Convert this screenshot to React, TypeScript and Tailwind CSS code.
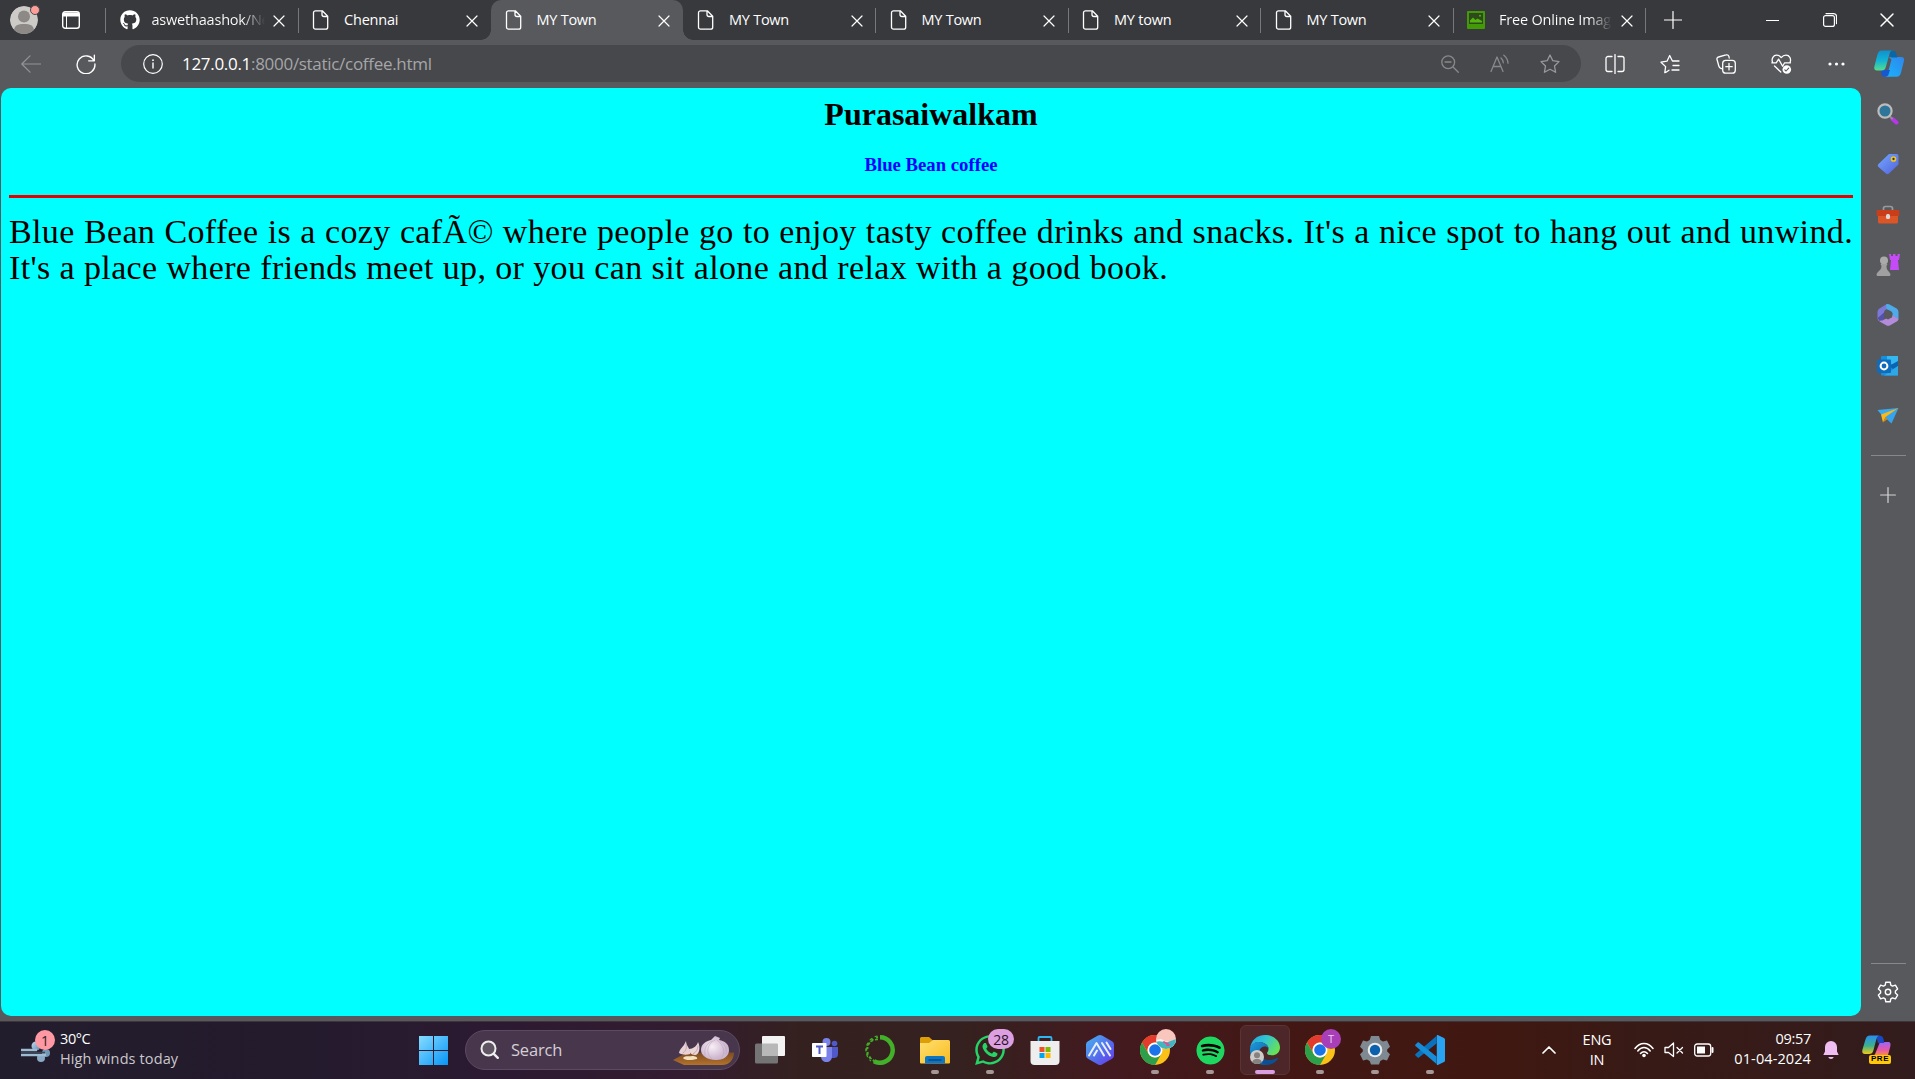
import React, { type ReactNode } from "react";
import { FaGithub, FaSpotify, FaWhatsapp } from "react-icons/fa";

type IconProps = { children: ReactNode; w?: number; h?: number; box?: string; className?: string };

const Icon = ({ children, w = 20, h = 20, box, className = "" }: IconProps) => (
  <svg
    width={w}
    height={h}
    viewBox={box ?? `0 0 ${w} ${h}`}
    fill="none"
    strokeLinecap="round"
    strokeLinejoin="round"
    className={`shrink-0 ${className}`}
  >
    {children}
  </svg>
);

/* ---------- tab strip ---------- */

const PageIcon = () => (
  <Icon w={18} h={20}>
    <path d="M3.5 .8h6.8l5.4 5.4v11a2 2 0 0 1-2 2H3.500a2 2 0 0 1-2-2V2.800a2 2 0 0 1 2-2z M10 1v3.500a2 2 0 0 0 2 2h3.600" stroke="#fff" strokeWidth="1.3" />
  </Icon>
);

const ImageIcon = () => (
  <Icon w={18} h={18}>
    <rect width="18" height="18" rx="1" fill="#429a06" />
    <rect x="2" y="2" width="14" height="11" fill="#2e4a1c" />
    <path d="M3 11.500V9.500l3-3 2.500 2.500 2-1.500 4.500 2.500v1.500z" fill="#53b60c" />
    <circle cx="13" cy="4.800" r="1" fill="#53b60c" />
  </Icon>
);

const Cross = ({ size = 10 }: { size?: number }) => (
  <Icon w={size} h={size} box="0 0 10 10" className="overflow-visible">
    <path d="M0 0l10 10M10 0L0 10" stroke="#fff" strokeWidth="1.2" />
  </Icon>
);

type TabData = { title: string; kind: "github" | "page" | "image"; active?: boolean; line?: boolean; fade?: boolean; spacing: string };

const tabs: TabData[] = [
  { title: "aswethaashok/Ne", kind: "github", line: true, fade: true, spacing: "tracking-[-0.2px]" },
  { title: "Chennai", kind: "page", spacing: "tracking-[-0.2px]" },
  { title: "MY Town", kind: "page", active: true, spacing: "tracking-[-0.25px]" },
  { title: "MY Town", kind: "page", line: true, spacing: "tracking-[-0.25px]" },
  { title: "MY Town", kind: "page", line: true, spacing: "tracking-[-0.25px]" },
  { title: "MY town", kind: "page", line: true, spacing: "tracking-[-0.2px]" },
  { title: "MY Town", kind: "page", line: true, spacing: "tracking-[-0.25px]" },
  { title: "Free Online Image", kind: "image", line: true, fade: true, spacing: "tracking-[-0.2px]" },
];

const Tab = ({ tab }: { tab: TabData }) => (
  <div
    className={`relative flex h-10 w-[192.5px] shrink-0 items-center pl-[14px] ${tab.active ? "rounded-t-[10px] bg-[#58595d]" : ""}`}
  >
    {tab.active && (
      <>
        <span className="absolute bottom-0 -left-[10px] size-[10px] bg-[radial-gradient(circle_at_0_0,#38393c_9.500px,#58595d_10px)]" />
        <span className="absolute bottom-0 -right-[10px] size-[10px] bg-[radial-gradient(circle_at_100%_0,#38393c_9.500px,#58595d_10px)]" />
      </>
    )}
    <span className="flex w-[32px] shrink-0">
      {tab.kind === "github" && <FaGithub className="size-5 text-white" />}
      {tab.kind === "page" && <PageIcon />}
      {tab.kind === "image" && <ImageIcon />}
    </span>
    <span
      className={`w-[113px] shrink-0 overflow-hidden text-[14.500px] leading-5 whitespace-nowrap ${tab.spacing} ${tab.fade ? "bg-linear-to-r from-white from-80% to-transparent bg-clip-text text-transparent" : "text-white"}`}
    >
      {tab.title}
    </span>
    <span className="ml-[9.500px] flex pt-px">
      <Cross />
    </span>
    {tab.line && <span className="absolute top-2 -right-[0.500px] h-[25px] w-px bg-[#77787b]" />}
  </div>
);

const TabStrip = () => (
  <header className="flex h-10 shrink-0 items-center bg-[#38393c]">
    <div className="flex w-[105px] shrink-0 items-center pl-[10px]">
      <div className="relative size-7">
        <Icon w={28} h={28} className="overflow-hidden rounded-full">
          <circle cx="14" cy="14" r="14" fill="#cdcbc8" />
          <circle cx="14" cy="10.500" r="6" fill="#8c8986" />
          <path d="M4 25c0-6 4-7 10-7s10 1 10 7c-6 5-14 5-20 0z" fill="#8c8986" />
        </Icon>
        <span className="absolute -top-px -right-[2px] size-[10px] rounded-full border border-[#4c4d50] bg-[#ff9e98]" />
      </div>
      <Icon w={18} h={18} className="ml-6">
        <rect x=".7" y=".7" width="16.600" height="16.600" rx="2.500" stroke="#fff" strokeWidth="1.400" />
        <path d="M1 1.500h16v4H1z" fill="#fff" />
        <path d="M4.500 5v12" stroke="#fff" strokeWidth="1" />
      </Icon>
    </div>
    <div className="relative ml-[0.500px] flex">
      <span className="absolute top-2 -left-[0.500px] h-[25px] w-px bg-[#77787b]" />
      {tabs.map((t, i) => (
        <Tab key={i} tab={t} />
      ))}
    </div>
    <div className="flex w-[54px] justify-center">
      <Icon w={18} h={18}>
        <path d="M9 .5v17M.5 9h17" stroke="#fff" strokeWidth="1.200" />
      </Icon>
    </div>
    <div className="-mr-px ml-auto flex">
      <span className="flex w-[57.500px] items-center justify-center">
        <span className="h-px w-[13px] bg-white" />
      </span>
      <span className="flex w-[57.500px] items-center justify-center">
        <Icon w={14} h={14}>
          <rect x=".6" y="2.600" width="10.800" height="10.800" rx="2" stroke="#fff" strokeWidth="1.200" />
          <path d="M3 .6h7.500a3 3 0 0 1 3 3v7" stroke="#fff" strokeWidth="1.200" />
        </Icon>
      </span>
      <span className="flex w-[57.500px] items-center justify-center">
        <Cross size={12} />
      </span>
    </div>
  </header>
);

/* ---------- address bar ---------- */

const Tool = ({ children }: { children: ReactNode }) => (
  <span className="flex w-[55.300px] shrink-0 items-center justify-center">{children}</span>
);

const Toolbar = () => (
  <div className="flex h-12 shrink-0 items-center bg-[#58595d] pb-px pr-[1px]">
    <div className="flex w-[121px] shrink-0 items-center pl-[21px]">
      <Icon w={20} h={18}>
        <path d="M19.500 9H.8M9 .8L.8 9 9 17.200" stroke="#939497" strokeWidth="1.200" />
      </Icon>
      <Icon w={20} h={20} box="0 0 22 22" className="ml-[35px]">
        <path d="M19.800 7.500A9.800 9.800 0 1 0 20.800 11M20.200 1.200v6.300h-6.300" stroke="#fff" strokeWidth="1.500" />
      </Icon>
    </div>
    <div className="flex h-[37px] w-[1460px] shrink-0 items-center rounded-full bg-[#47484b] pl-[22px]">
      <Icon w={20} h={20}>
        <circle cx="10" cy="10" r="9.300" stroke="#fff" strokeWidth="1.200" />
        <path d="M10 9v5" stroke="#fff" strokeWidth="1.400" />
        <circle cx="10" cy="6.200" r=".9" fill="#fff" />
      </Icon>
      <span className="ml-[19px] text-[17px] tracking-[-0.3px] text-[#a5a6a8]">
        <span className="text-white">127.0.0.1</span>:8000/static/coffee.html
      </span>
      <div className="mr-[6px] ml-auto flex">
        <span className="flex w-[50px] items-center justify-center">
          <Icon w={18} h={18}>
            <path d="M12.300 12.300l5 5M4 7h6" stroke="#88898b" strokeWidth="1.300" />
            <circle cx="7.200" cy="7.200" r="6.400" stroke="#88898b" strokeWidth="1.300" />
          </Icon>
        </span>
        <span className="flex w-[50px] items-center justify-center">
          <Icon w={20} h={19}>
            <path d="M1 17.500L7 3l6 14.500M3 12.500h8M11 4c1.500 1.300 2.200 2.800 2.300 4.800M13.800 1.200c2.600 2 4 4.800 4.200 8" stroke="#88898b" strokeWidth="1.300" />
          </Icon>
        </span>
        <span className="flex w-[50px] items-center justify-center">
          <Icon w={20} h={20}>
            <path d="M10 1l2.800 5.700 6.200.9-4.500 4.400 1.100 6.300L10 15.300l-5.600 3 1.100-6.300L1 7.600l6.200-.9z" stroke="#98999b" strokeWidth="1.300" />
          </Icon>
        </span>
      </div>
    </div>
    <div className="ml-auto flex items-center">
      <Tool>
        <Icon w={20} h={20}>
          <path d="M7 2.500H3a2 2 0 0 0-2 2v11a2 2 0 0 0 2 2h4M13 2.500h4a2 2 0 0 1 2 2v11a2 2 0 0 1-2 2h-4M10 .6v18.800" stroke="#fff" strokeWidth="1.300" />
        </Icon>
      </Tool>
      <Tool>
        <Icon w={20} h={20}>
          <path d="M6 18.200l-1.200.5.800-6.100L1 8.200l6-1L9.700 1.500 12.400 7H19M13 11.500h6M12 16h7M6 18.200l3-2" stroke="#fff" strokeWidth="1.300" />
        </Icon>
      </Tool>
      <Tool>
        <Icon w={20} h={20}>
          <path d="M6.500 15L4.800 14.300a3 3 0 0 1-1.900-2L1 5.500a2 2 0 0 1 1.500-2.500L10 .9a2.300 2.300 0 0 1 2.900 1.500l.3 1.600M13 9.500v6.400M9.800 12.700h6.400" stroke="#fff" strokeWidth="1.300" />
          <rect x="6.700" y="6.300" width="12.600" height="12.900" rx="3" stroke="#fff" strokeWidth="1.300" />
        </Icon>
      </Tool>
      <Tool>
        <Icon w={21} h={20}>
          <path d="M1.500 8C.2 4.500 2.500 1.200 5.500 1.200c2 0 3.500.8 4.700 2.400C11.500 2 13 1.200 15 1.200c3.500 0 5.300 3.500 4.200 6.800M.8 8.800h4.400l2.400-3.700 4 7.200 2-3.500h5.900M3.500 12l6.300 6" stroke="#fff" strokeWidth="1.300" />
          <circle cx="15.800" cy="15.500" r="4.300" fill="#fff" />
          <path d="M13.800 15.800l1.300 1.200 2.600-2.800" stroke="#58595d" strokeWidth="1.100" />
        </Icon>
      </Tool>
      <Tool>
        <Icon w={17} h={4}>
          <circle cx="2" cy="2" r="1.600" fill="#fff" />
          <circle cx="8.500" cy="2" r="1.600" fill="#fff" />
          <circle cx="15" cy="2" r="1.600" fill="#fff" />
        </Icon>
      </Tool>
      <span className="flex w-[50px] items-center justify-center">
        <Icon w={30} h={27}>
          <defs>
            <linearGradient id="copA" x1="0" y1="0" x2="0" y2="1">
              <stop stopColor="#0f91cf" />
              <stop offset=".5" stopColor="#12b3d4" />
              <stop offset="1" stopColor="#56dd8e" />
            </linearGradient>
            <linearGradient id="copB" x1="1" y1="0" x2="0" y2="1">
              <stop stopColor="#2f86ee" />
              <stop offset="1" stopColor="#18b5fb" />
            </linearGradient>
          </defs>
          <path d="M15 7h12.500c2.500 0 2.900 2 2.300 4.500l-2.800 11c-.8 3-2 4.200-4.500 4.200H10c2.500 0 3.500-2 4-4.200l3.500-13z" fill="url(#copB)" />
          <path d="M7 20h9l-1.500 4.500c-.5 1.500-1.800 2.300-4 2.300-2 0-2.600-1-3-3z" fill="#1758d0" />
          <path d="M15 .8h4c2.200 0 3 1.500 3.500 3.500l.8 3.200H17z" fill="#0a66a5" />
          <path d="M8 .5h11c-2.200 0-3 1.500-3.700 4L12 16.500c-.9 3-2 4-4.500 4H3C.5 20.500-.2 18.500.5 16L3.300 5C4.200 1.800 5.500.5 8 .5z" fill="url(#copA)" />
        </Icon>
      </span>
    </div>
  </div>
);

/* ---------- web page ---------- */

const Page = () => (
  <main className="ml-px flex h-[927.500px] w-[1860px] shrink-0 flex-col rounded-[10px] bg-[#00ffff] px-2 pt-2 font-['Liberation_Serif',serif] text-black">
    <h1 className="text-center text-[32px] leading-[37px] font-bold">Purasaiwalkam</h1>
    <h3 className="mt-[21px] text-center text-[18.720px] leading-[21px] font-bold text-[#0000ff]">Blue Bean coffee</h3>
    <hr className="mt-5 h-[3px] shrink-0 border-0 bg-[#e60000]" />
    <div className="mt-4 text-[34px] leading-9 whitespace-nowrap">
      <p className="tracking-[0.36px] [text-align-last:justify]">
        Blue Bean Coffee is a cozy cafÃ© where people go to enjoy tasty coffee drinks and snacks. It's a nice spot to hang out and unwind.
      </p>
      <p className="w-[1159px] tracking-[0.36px] [text-align-last:justify]">
        It's a place where friends meet up, or you can sit alone and relax with a good book.
      </p>
    </div>
  </main>
);

/* ---------- side bar ---------- */

const sideIcons: ReactNode[] = [
  <Icon key="search" w={22} h={22}>
    <path d="M15.500 16l4 3.500" stroke="#b835ee" strokeWidth="4" />
    <path d="M12 12.500l3 3" stroke="#8f8f92" strokeWidth="2" />
    <circle cx="8" cy="8" r="6.600" fill="#2d7599" stroke="#bcbcbc" strokeWidth="2.200" />
  </Icon>,
  <Icon key="tag" w={22} h={22}>
    <defs>
      <linearGradient id="tag" x1="0" y1="0" x2="1" y2="1">
        <stop stopColor="#73a9ff" />
        <stop offset="1" stopColor="#5361dc" />
      </linearGradient>
    </defs>
    <path d="M12 1h7.500A2 2 0 0 1 21.500 3v8.500L12 20.500c-1 1-2 1-3 0L1.500 14c-1-1-1-2 0-3z" fill="url(#tag)" />
    <circle cx="16.500" cy="6" r="2" stroke="#f2c51b" strokeWidth="1.700" fill="#333" />
  </Icon>,
  <Icon key="box" w={24} h={20}>
    <path d="M7.500 6V3.500a2 2 0 0 1 2-2h5a2 2 0 0 1 2 2V6" stroke="#9a9a9a" strokeWidth="1.700" />
    <rect x="2" y="6" width="20" height="12.500" rx="1.500" fill="#db5527" />
    <path d="M1.500 5h21a.8.8 0 0 1 .8.800V11H.7V5.800a.8.800 0 0 1 .8-.8z" fill="#c93d19" />
    <rect x="10" y="9" width="4" height="5" rx="1.500" fill="#d9d9d9" />
  </Icon>,
  <Icon key="chess" w={24} h={24}>
    <path d="M13 1h2v2h2V1h2.500v2h2V1H24l-1 6h-1l1 10h-9l1-10h-1z" fill="#c44bf5" />
    <circle cx="8" cy="7.500" r="4" fill="#aaa" />
    <path d="M4.500 11h7l-1 2c0 3 .7 4 3 6.500 1.500 1.500 1 3.500 0 3.500H1.500C.5 23 0 21 1.500 19.500 4 17 5.500 16 5.500 13z" fill="#a0a0a0" />
  </Icon>,
  <Icon key="m365" w={22} h={22}>
    <path d="M9 .5L2.500 4.500A4 4 0 0 0 .5 8v7c1 2 3 2 4.500 1l2-1V8.500c0-1.500 1-2.500 2-3l4-2z" fill="#7d78d8" />
    <path d="M9 .5c1.200-.7 2.500-.6 3.600 0l7 4A4 4 0 0 1 21.500 8v7l-6-3.300V10c0-1.500-.7-2.500-2-3L9.500 5z" fill="#4eaae9" />
    <path d="M1 16l4.500.5 5-2.800 4.700-2.500 6.300 3.500c0 1.400-.6 2-1.800 2.700l-6.500 3.800c-1.300.8-2.700.8-4 0L3 17.800z" fill="#b48ada" />
    <path d="M7 8.500v6.800L2.500 17 .7 14z" fill="#5551a7" />
    <path d="M7.300 8.800l3.700-2.200 4.200 2.400v4.200L11 15.600l-3.700-2z" fill="#58595d" />
  </Icon>,
  <Icon key="outlook" w={22} h={22}>
    <rect x="4" y="1" width="17" height="19.500" rx="1" fill="#1490df" />
    <path d="M10 1h11v8H10z" fill="#35b8f1" />
    <path d="M12 11l9-5v5l-5 3z" fill="#0a64b0" />
    <path d="M21 11v9.500H7z" fill="#2fa6e6" />
    <rect y="4.500" width="14" height="13.500" rx="1" fill="#0f6cbd" />
    <circle cx="7" cy="11" r="3.400" stroke="#fff" strokeWidth="2" />
  </Icon>,
  <Icon key="plane" w={22} h={18}>
    <path d="M.5 3L21.500 1 5 8.500z" fill="#39a9f0" />
    <path d="M21.500 1L14.500 16.500 7.500 10z" fill="#35a4ef" />
    <path d="M4 7.500L21.500 1 8.500 10 6 15.500z" fill="#f8b91b" />
    <path d="M6 15.500l2.500-5.500 2 2z" fill="#d98a10" />
  </Icon>,
];

const SideBar = () => (
  <aside className="ml-auto flex w-[53px] shrink-0 flex-col items-center pt-px">
    {sideIcons.map((icon, i) => (
      <span key={i} className="mr-px flex h-[50.300px] shrink-0 items-center justify-center">
        {icon}
      </span>
    ))}
    <span className="mt-[14px] h-px w-[35px] shrink-0 bg-[#87888b]" />
    <Icon w={16} h={16} className="mt-[31px] mr-px">
      <path d="M8 .6v14.800M.6 8h14.800" stroke="#d5d5d6" strokeWidth="1.200" />
    </Icon>
    <span className="mt-auto h-px w-[35px] shrink-0 bg-[#87888b]" />
    <Icon w={22} h={22} className="mt-[17px] mr-px mb-[18px]">
      <path
        d="M8.800 1.200h4.400l.6 2.900 1.700 1 2.900-1 2.200 3.800-2.200 2v2.200l2.200 2-2.200 3.800-2.900-1-1.700 1-.6 2.900H8.800l-.6-2.900-1.700-1-2.900 1-2.200-3.800 2.200-2V9.900l-2.200-2 2.200-3.800 2.900 1 1.700-1z"
        stroke="#fff"
        strokeWidth="1.400"
      />
      <circle cx="11" cy="11" r="2.700" stroke="#fff" strokeWidth="1.400" />
    </Icon>
  </aside>
);

/* ---------- task bar ---------- */

const Weather = () => (
  <div className="flex items-center pl-5">
    <div className="relative h-[34px] w-[36px]">
      <Icon w={32} h={34}>
        <defs>
          <linearGradient id="wind" x1="0" y1="0" x2="1" y2="1">
            <stop stopColor="#c6dcef" />
            <stop offset="1" stopColor="#5787ac" />
          </linearGradient>
        </defs>
        <circle cx="16" cy="13" r="4.500" fill="url(#wind)" />
        <circle cx="26" cy="20" r="4" fill="#7398b6" />
        <circle cx="21" cy="25" r="4" fill="#89aac5" />
        <path d="M1 17h16M1 22h25" stroke="#9ebbd4" strokeWidth="2.400" strokeLinecap="butt" />
        <path d="M1 19.500h24" stroke="#3a4457" strokeWidth="1.500" strokeLinecap="butt" />
      </Icon>
      <span className="absolute -top-[3px] left-[15px] flex size-5 items-center justify-center rounded-full bg-[#ff98a2] text-[14px] text-[#2b1d24]">1</span>
    </div>
    <div className="ml-1 pb-[2px] text-[14.500px] leading-5">
      <div className="tracking-[-0.4px] text-white">30°C</div>
      <div className="tracking-[0.120px] text-[#cac8cc]">High winds today</div>
    </div>
  </div>
);

const Windows = () => (
  <Icon w={29} h={29}>
    <defs>
      <linearGradient id="win" x1="0" y1="0" x2="29" y2="29" gradientUnits="userSpaceOnUse">
        <stop stopColor="#86dcff" />
        <stop offset="1" stopColor="#0795f7" />
      </linearGradient>
    </defs>
    <path d="M0 0h14v14H0zM15 0h14v14H15zM0 15h14v14H0zM15 15h14v14H15z" fill="url(#win)" />
  </Icon>
);

const Garlic = () => (
  <Icon w={62} h={32}>
    <defs>
      <radialGradient id="bulb" cx=".4" cy=".45">
        <stop stopColor="#f8eff5" />
        <stop offset="1" stopColor="#cdb6cf" />
      </radialGradient>
      <linearGradient id="board" x1="0" y1="0" x2="0" y2="1">
        <stop stopColor="#7d4c24" />
        <stop offset="1" stopColor="#b3712b" />
      </linearGradient>
    </defs>
    <path d="M0 24l13-7 48-.5c0 6-4 12.500-12 12.500H11z" fill="url(#board)" />
    <path d="M6 17c1-5 4-5 7-12 0 5 5 8 4 13-3 1-8 1-11-1z" fill="#e9d2d6" />
    <path d="M16 13c4 0 8-3 9-7 3 6 1 13-3 13-4 0-6-3-6-6z" fill="#ead6d7" />
    <path d="M13 8c1 4 0 7-3 9M25 10c0 4-2 6-5 8" stroke="#b89aa4" strokeWidth=".8" />
    <path d="M10 22c3-3 6-1 9-2 3 0 6 1 5 3-4 1-12 2-14-1z" fill="#f3e1bb" />
    <path d="M28 14c0-6 5-9 10-10l4-4 5 2-1 2c6 1 10 4 10 10s-5 10-13 10-15-4-15-10z" fill="url(#bulb)" />
    <path d="M42 4c-8 4-10 13-3 19M44 4c7 5 9 13 4 19M39 5c-6 3-8 8-7 14M47 5c6 4 7 9 6 13" stroke="#bfa5c2" strokeWidth=".6" />
  </Icon>
);

const TaskView = () => (
  <Icon w={30} h={30}>
    <rect x="0" y="8.500" width="23" height="20" rx="1.500" fill="#747474" />
    <rect x="7" y="1" width="23" height="20" rx="1" fill="#f3f3f3" />
    <path d="M7 8.500h15a1 1 0 0 1 1 1V21H8a1 1 0 0 1-1-1z" fill="#b9b8b8" />
  </Icon>
);

const Teams = () => (
  <Icon w={26} h={26}>
    <circle cx="22.500" cy="6.500" r="2.800" fill="#5059c9" />
    <path d="M18 10h8v7c0 3-2 4-4 4h-4z" fill="#5059c9" />
    <circle cx="14.500" cy="5" r="4" fill="#7b83eb" />
    <path d="M9 10h11v9c0 4-2.500 6-5.500 6S9 23 9 19z" fill="#7b83eb" />
    <rect y="6" width="14.500" height="14" rx=".7" fill="#fff" />
    <path d="M4 9.500h7M7.500 9.500v7.500" stroke="#5059c9" strokeWidth="2" strokeLinecap="butt" />
  </Icon>
);

const Anaconda = () => (
  <Icon w={30} h={30}>
    <path d="M15 2.300A12.700 12.700 0 1 1 9 26.200" stroke="#43b02a" strokeWidth="4.500" strokeLinecap="butt" />
    <path d="M13 2.300A12.700 12.700 0 0 0 10 26.500" stroke="#43b02a" strokeWidth="2" strokeDasharray="2 3" strokeLinecap="butt" />
    <path d="M13 4.500A10.500 10.500 0 0 0 9 25" stroke="#43b02a" strokeWidth="1.500" strokeDasharray="3 2" strokeLinecap="butt" />
    <path d="M12.500 1A14.300 14.300 0 0 0 6 26" stroke="#43b02a" strokeWidth="1.200" strokeDasharray="3 3" strokeLinecap="butt" />
  </Icon>
);

const Folder = () => (
  <Icon w={30} h={30}>
    <defs>
      <linearGradient id="fold" x1="0" y1="0" x2="1" y2="1">
        <stop stopColor="#ffe06e" />
        <stop offset="1" stopColor="#f9bb22" />
      </linearGradient>
    </defs>
    <path d="M0 3.500A1.500 1.500 0 0 1 1.500 2H9l4 3.500V11H0z" fill="#dd9e08" />
    <path d="M0 8h9l4-3h15.500A1.500 1.500 0 0 1 30 6.500v21a1 1 0 0 1-1 1H1a1 1 0 0 1-1-1z" fill="url(#fold)" />
    <path d="M5 28.500V23a2 2 0 0 1 2-2h16a2 2 0 0 1 2 2v5.500z" fill="#0c75c5" />
    <path d="M9 25h12" stroke="#07497f" strokeWidth="1.300" />
  </Icon>
);

const Store = () => (
  <Icon w={30} h={30}>
    <path d="M8.500 8V3.200A1.200 1.200 0 0 1 9.700 2h10.600a1.200 1.200 0 0 1 1.200 1.200V8" stroke="#2db6ef" strokeWidth="1.800" />
    <path d="M.5 6h29v20a4 4 0 0 1-4 4h-21a4 4 0 0 1-4-4z" fill="#eeeeee" />
    <path d="M9.500 12h5v5h-5z" fill="#f25022" />
    <path d="M15.500 12h5v5h-5z" fill="#7fba00" />
    <path d="M9.500 18h5v5h-5z" fill="#00a4ef" />
    <path d="M15.500 18h5v5h-5z" fill="#ffb900" />
  </Icon>
);

const HexApp = () => (
  <Icon w={30} h={30}>
    <defs>
      <linearGradient id="hex" x1="0" y1="0" x2="1" y2="1">
        <stop stopColor="#48b5f0" />
        <stop offset=".6" stopColor="#5568ec" />
        <stop offset="1" stopColor="#6a35ec" />
      </linearGradient>
    </defs>
    <path d="M13 .6a4 4 0 0 1 4 0l10 5.600a3.500 3.500 0 0 1 2 3v11.600a3.500 3.500 0 0 1-2 3l-10 5.600a4 4 0 0 1-4 0L3 23.800a3.500 3.500 0 0 1-2-3V9.200a3.500 3.500 0 0 1 2-3z" fill="url(#hex)" />
    <path d="M4 20.500L11.500 8l7.500 12.500M9 20.500l3-5M17 8l8 12.500M21.500 7.500l4 6.500" stroke="#e9efff" strokeWidth="2" />
  </Icon>
);

const Chrome = () => (
  <Icon w={30} h={30}>
    <circle cx="15" cy="15" r="15" fill="#fbc116" />
    <path d="M2 7.500A15 15 0 0 1 28 7.500H15A7.500 7.500 0 0 0 8.500 18.700z" fill="#e33b2e" />
    <path d="M2 7.500A15 15 0 0 0 15 30l6.500-11.300a7.500 7.500 0 0 1-13 0z" fill="#2d9f4b" />
    <circle cx="15" cy="15" r="7.500" fill="#fff" />
    <circle cx="15" cy="15" r="5.800" fill="#1a73e8" />
  </Icon>
);

const Edge = () => (
  <Icon w={30} h={30}>
    <defs>
      <linearGradient id="edA" x1="0" y1="0" x2="1" y2=".5">
        <stop stopColor="#259fe0" />
        <stop offset=".5" stopColor="#30c5d2" />
        <stop offset="1" stopColor="#66e05a" />
      </linearGradient>
      <linearGradient id="edB" x1="0" y1="0" x2="1" y2="1">
        <stop stopColor="#1b9de2" />
        <stop offset="1" stopColor="#0b3f80" />
      </linearGradient>
    </defs>
    <path d="M0 14C1 5 7 0 15 0c9 0 15 6 15 12.500 0 5-4 7.800-8 7.800-3 0-5-1-5-2.300 0-.8 1.500-1.500 1.500-4C18.500 10 14 7 9 7c-5 0-8 3.500-9 7z" fill="url(#edA)" />
    <path d="M0 14C1 9.500 4.500 7 9 7c5 0 9.500 3 9.500 6.500-1-1.500-2.500-2-4-2-3 0-5.500 3-5.500 7 0 6 5 9.500 10 9.500 3 0 6-1.500 8-3.500C24.500 28.500 20 30 15 30 6 30-.5 23 0 14z" fill="url(#edB)" />
    <path d="M9.500 19c1.500 4 5.500 6 10 6 3 0 5.500-1 7.500-2 1-.4 1.300.4.800 1C25 28 20 30 16.500 29.500 12 29 8.500 24 9.500 19z" fill="#0c4f93" />
  </Icon>
);

const Gear = () => (
  <Icon w={30} h={30}>
    <path
      d="M11 1h8l1.300 4 2.700 1.500 4-1 3 6.200-2.800 2.800v2l2.800 2.800-3 6.200-4-1L20.300 26 19 29.500h-8L9.700 26 7 24.500l-4 1-3-6.200 2.800-2.800v-2L0 11.700l3-6.200 4 1L9.700 5z"
      fill="#7f8991"
    />
    <circle cx="15" cy="15" r="7.300" fill="#ececec" />
    <circle cx="15" cy="15" r="5.200" fill="#0b61ae" />
  </Icon>
);

const VsCode = () => (
  <Icon w={30} h={30}>
    <path d="M21.500 1v7.500L4 22.500c-.5.400-1 .3-1.400 0L.5 20.600c-.5-.5-.5-1.200 0-1.700z" fill="#0a72bd" />
    <path d="M21.500 29v-7.500L4 7.500c-.5-.4-1-.3-1.400 0L.5 9.400c-.5.5-.5 1.200 0 1.700z" fill="#168dd8" />
    <path d="M21.800.3c.4-.3.900-.3 1.500 0L29 3c.6.3 1 .9 1 1.600v20.800c0 .7-.4 1.300-1 1.600l-5.700 2.700c-.6.300-1.100.3-1.500 0z" fill="#28a4f2" />
  </Icon>
);

type App = { name: string; icon: ReactNode; badge?: ReactNode; running?: boolean; active?: boolean };

const apps: App[] = [
  { name: "view", icon: <TaskView /> },
  { name: "teams", icon: <Teams /> },
  { name: "anaconda", icon: <Anaconda /> },
  { name: "files", icon: <Folder />, running: true },
  {
    name: "whatsapp",
    icon: <FaWhatsapp className="size-[34px] shrink-0 text-[#25d366]" />,
    running: true,
    badge: (
      <span className="absolute -top-[6px] left-[13px] flex h-5 w-[26px] items-center justify-center rounded-full bg-[#dd9fe2] text-[14px] tracking-tight text-[#24151f]">28</span>
    ),
  },
  { name: "store", icon: <Store /> },
  { name: "hex", icon: <HexApp /> },
  {
    name: "chrome",
    icon: <Chrome />,
    running: true,
    badge: (
      <Icon w={20} h={20} className="absolute -top-[6px] left-4 overflow-hidden rounded-full">
        <rect width="20" height="20" fill="#f9c6bd" />
        <path d="M0 11l5-1 4 2 5 1 6-3v11H0z" fill="#f3f4ee" />
        <path d="M0 13c5-2 7 1 12 0l8-3v10H0z" fill="#40b6c0" />
        <path d="M8 13l4 2M11 16h2" stroke="#d85292" strokeWidth="1.800" />
      </Icon>
    ),
  },
  { name: "spotify", icon: <FaSpotify className="size-[29px] rounded-full bg-[radial-gradient(#000_55%,transparent_60%)] text-[#1ed760]" />, running: true },
  {
    name: "edge",
    icon: <Edge />,
    active: true,
    badge: (
      <Icon w={14} h={14} className="absolute top-[15px] left-0 overflow-hidden rounded-full">
        <rect width="14" height="14" fill="#cecbc8" />
        <circle cx="7" cy="5.300" r="3" fill="#85827f" />
        <path d="M2 14c0-4 2-5 5-5s5 1 5 5z" fill="#85827f" />
      </Icon>
    ),
  },
  {
    name: "chrome2",
    icon: <Chrome />,
    running: true,
    badge: <span className="absolute -top-[6px] left-4 flex size-5 items-center justify-center rounded-full bg-[#a83fb8] text-[11px] text-[#eccdf0]">T</span>,
  },
  { name: "settings", icon: <Gear />, running: true },
  { name: "code", icon: <VsCode />, running: true },
];

const AppCell = ({ app }: { app: App }) => (
  <div className="flex w-[55px] shrink-0 justify-center">
    <div className={`relative flex h-[50px] w-[50px] items-center justify-center rounded-md ${app.active ? "border border-[#5b3335] bg-[#4c2628]" : ""}`}>
      <div className="relative flex size-[30px] items-center justify-center">
        {app.icon}
        {app.badge}
      </div>
      {app.running && <span className="absolute bottom-[1px] left-[21px] h-1 w-2 rounded-full bg-[#a69797]" />}
      {app.active && <span className="absolute bottom-0 left-[14px] h-1 w-5 rounded-full bg-[#d99ee0]" />}
    </div>
  </div>
);

const Tray = () => (
  <div className="ml-auto flex items-center text-[14.500px] leading-5 text-white">
    <Icon w={14} h={8}>
      <path d="M1 7l6-6 6 6" stroke="#fff" strokeWidth="1.700" />
    </Icon>
    <div className="ml-[21px] w-10 pb-px text-center tracking-[-0.2px]">
      <div>ENG</div>
      <div>IN</div>
    </div>
    <Icon w={20} h={16} className="ml-[17px]">
      <path d="M1 6.500C6-.2 14-.2 19 6.500M3.800 9c3.600-4.600 8.800-4.600 12.400 0M6.500 11.500c2-2.400 5-2.400 7 0" stroke="#fff" strokeWidth="1.500" />
      <circle cx="10" cy="13.500" r="1.800" fill="#fff" />
    </Icon>
    <Icon w={20} h={16} className="ml-[10px]">
      <path d="M1 5.500h3.500L9.500 1v13.500L4.500 10.500H1zM13 5.500l5.500 5.500M18.500 5.500L13 11" stroke="#fff" strokeWidth="1.300" />
    </Icon>
    <Icon w={20} h={14} className="ml-[10px]">
      <rect x=".7" y="1" width="16" height="12" rx="2.500" stroke="#fff" strokeWidth="1.300" />
      <path d="M3 3.500h8v7H3z" fill="#fff" />
      <path d="M18.500 5v4" stroke="#fff" strokeWidth="2" />
    </Icon>
    <div className="ml-[17px] w-20 pb-[2px] text-right whitespace-nowrap">
      <div className="tracking-[-0.3px]">09:57</div>
      <div className="tracking-[0.1px]">01-04-2024</div>
    </div>
    <Icon w={16} h={20} className="ml-3">
      <path d="M8 1a6 6 0 0 1 6 6v4.500l1.500 3v.5H.5v-.5l1.500-3V7a6 6 0 0 1 6-6z" fill="#f0bdf2" />
      <path d="M5.300 17h5.400c-.7 2.600-4.700 2.600-5.400 0z" fill="#f0bdf2" />
    </Icon>
    <div className="relative mr-6 ml-[23px] h-[30px] w-[29px]">
      <Icon w={29} h={26}>
        <defs>
          <linearGradient id="preA" x1="0" y1="0" x2="0" y2="1">
            <stop stopColor="#2a8df0" />
            <stop offset=".55" stopColor="#3bb08f" />
            <stop offset="1" stopColor="#f1c916" />
          </linearGradient>
          <linearGradient id="preB" x1="0" y1="0" x2="0" y2="1">
            <stop stopColor="#9a66f5" />
            <stop offset=".6" stopColor="#e858a8" />
            <stop offset="1" stopColor="#f58a55" />
          </linearGradient>
        </defs>
        <path d="M18 7h8c2.500 0 2.900 2 2.300 4.500L26 20H11c2.500 0 2-1 2.500-2z" fill="url(#preB)" />
        <path d="M14 .8h4c2.200 0 3 1.500 3.500 3.500L22.300 8H16z" fill="#1848c2" />
        <path d="M8 .5h10c-2.200 0-3 1.500-3.700 4L11.500 15c-.9 3-2 4-4.500 4H3C.5 19-.2 17 .5 14.500L3.300 5C4.200 1.800 5.500.5 8 .5z" fill="url(#preA)" />
      </Icon>
      <span className="absolute top-[19.500px] left-[7px] flex h-[9.500px] w-[22px] items-center justify-center rounded-[2px] bg-[#ffc80a] font-['Liberation_Sans',sans-serif] text-[8px] leading-none font-bold tracking-[0.5px] text-black">PRE</span>
    </div>
  </div>
);

const TaskBar = () => (
  <footer className="flex h-[58px] shrink-0 items-center border-t border-[#3d3539] bg-[linear-gradient(90deg,#221d2d_0,#241b2d_300px,#2c1a32_500px,#331c30_690px,#34211f_800px,#35211f_960px,#431a1f_1110px,#421714_1290px,#401811_1490px,#371a16_1650px,#331c1d_1915px)] pb-px">
    <div className="w-[405px] shrink-0">
      <Weather />
    </div>
    <div className="flex w-[60px] shrink-0 pl-[14px]">
      <Windows />
    </div>
    <div className="flex h-10 w-[275px] shrink-0 items-center rounded-full border border-[#5b4a62] bg-[#48374c] pl-[14px]">
      <Icon w={20} h={20}>
        <circle cx="8.500" cy="8.500" r="7" fill="#605563" stroke="#eee" strokeWidth="2" />
        <path d="M13.800 13.800l4 4" stroke="#eee" strokeWidth="2.400" />
      </Icon>
      <span className="ml-[11px] text-[16.500px] tracking-[-0.2px] text-[#d4ced6]">Search</span>
      <span className="mr-[4px] ml-auto flex pt-1">
        <Garlic />
      </span>
    </div>
    <div className="ml-[2.500px] flex">
      {apps.map((a) => (
        <AppCell key={a.name} app={a} />
      ))}
    </div>
    <Tray />
  </footer>
);

export default function App() {
  return (
    <div className="flex h-[1079px] w-[1915px] flex-col overflow-hidden bg-[#58595d] font-['Open_Sans','Noto_Sans',sans-serif]">
      <TabStrip />
      <Toolbar />
      <div className="flex h-[933px] shrink-0">
        <Page />
        <SideBar />
      </div>
      <TaskBar />
    </div>
  );
}
